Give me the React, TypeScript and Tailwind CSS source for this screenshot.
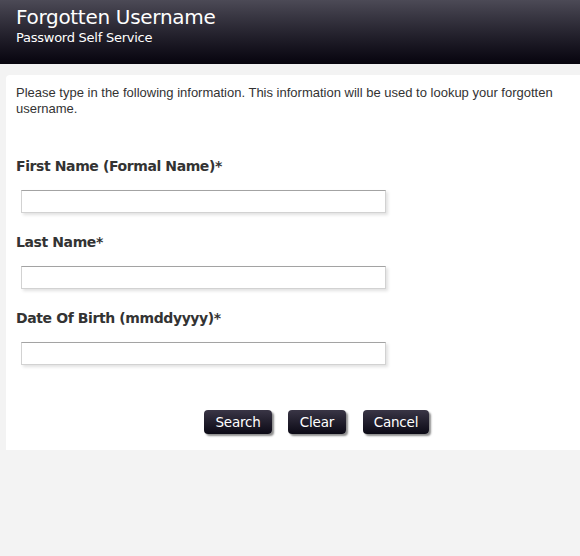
import React from 'react'

function Field({ label }: { label: string }) {
  return (
    <div className="flex flex-col">
      <label className="h-5 pt-px text-[14px] font-bold leading-5 tracking-[-0.4px] text-[#333] [font-family:'DejaVu_Sans',Tahoma,sans-serif]">
        {label}
      </label>
      <input
        type="text"
        className="mt-[15px] ml-[5px] h-[23px] w-[365px] border border-[#d2d2d2] border-t-[#a3a3a3] bg-white shadow-[2px_2px_3px_rgba(0,0,0,0.12)] outline-none"
      />
    </div>
  )
}

function FormButton({ children, width }: { children: React.ReactNode; width: string }) {
  return (
    <button
      type="button"
      className={`${width} h-6 rounded-[4px] bg-gradient-to-b from-[#3a3646] to-[#0c0a16] text-[13.5px] leading-6 tracking-[-0.2px] text-white shadow-[2px_2px_2px_rgba(0,0,0,0.45)] [font-family:'DejaVu_Sans',Tahoma,sans-serif]`}
    >
      {children}
    </button>
  )
}

export default function App() {
  return (
    <div className="min-h-[556px] w-[580px] bg-[#f3f3f3]">
      {/* Header */}
      <header className="h-16 bg-gradient-to-b from-[#4c4a56] to-[#07050e] px-4 pt-[4px] text-white [font-family:'DejaVu_Sans',Tahoma,sans-serif]">
        <h1 className="text-[20px] leading-[26px] tracking-[-0.3px]">Forgotten Username</h1>
        <p className="text-[13px] leading-[16px] tracking-[-0.25px]">Password Self Service</p>
      </header>

      {/* Card */}
      <div className="pt-[11px] pl-[6px]">
        <div className="h-[375px] rounded-tl-[4px] bg-white pl-[10px] pt-[10px]">
          <p className="pr-4 text-[13px] leading-4 text-[#333] [font-family:'Liberation_Sans',Arial,sans-serif]">
            Please type in the following information. This information will be used to lookup your forgotten
            username.
          </p>

          <div className="mt-[38px] flex flex-col gap-[18px]">
            <Field label="First Name (Formal Name)*" />
            <Field label="Last Name*" />
            <Field label="Date Of Birth (mmddyyyy)*" />
          </div>

          <div className="mt-[45px] flex pl-[188px]">
            <FormButton width="w-[68px]">Search</FormButton>
            <div className="w-4" />
            <FormButton width="w-[58px]">Clear</FormButton>
            <div className="w-[17px]" />
            <FormButton width="w-[66px]">Cancel</FormButton>
          </div>
        </div>
      </div>
    </div>
  )
}
